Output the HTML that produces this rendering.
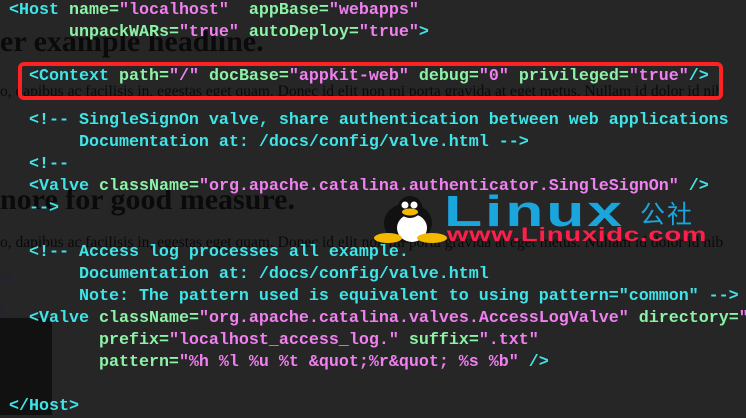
<!DOCTYPE html>
<html><head><style>
body{margin:0;width:746px;height:415px;background:#262626;overflow:hidden;position:relative}
.g{position:absolute;font-family:"Liberation Serif",serif;color:#0a0a0a;white-space:nowrap}
.h{font-size:30px;font-weight:bold}
.p{font-size:15.5px}
.l{position:absolute;left:9px;font-family:"Liberation Mono",monospace;font-size:16.67px;font-weight:bold;white-space:pre;line-height:22px}
.t{color:#3fe4e8}.a{color:#8cf2a6}.v{color:#f080f0}.c{color:#3fe4e8}
</style></head><body>
<div style="position:absolute;left:0;top:318px;width:52px;height:97px;background:#111"></div>
<div class="g h" style="left:0;top:25px">er example headline.</div>
<div class="g p" style="left:0;top:83px">o, dapibus ac facilisis in, egestas eget quam. Donec id elit non mi porta gravida at eget metus. Nullam id dolor id nib</div>
<div class="g h" style="left:0;top:183px">nore for good measure.</div>
<div class="g p" style="left:0;top:234px">o, dapibus ac facilisis in, egestas eget quam. Donec id elit non mi porta gravida at eget metus. Nullam id dolor id nib</div>
<div class="g p" style="left:0;top:268px;color:#223;text-decoration:underline">ry</div>
<div class="g p" style="left:0;top:298px;color:#223;text-decoration:underline">t</div>
<div style="position:absolute;left:18px;top:62px;width:697px;height:30px;border:4px solid #ff2222;border-radius:6px"></div>

<div class="l" style="top:0"><span class="t">&lt;Host</span> <span class="a">name=</span><span class="v">"localhost"</span>  <span class="a">appBase=</span><span class="v">"webapps"</span></div>
<div class="l" style="top:22px">      <span class="a">unpackWARs=</span><span class="v">"true"</span> <span class="a">autoDeploy=</span><span class="v">"true"</span><span class="t">&gt;</span></div>
<div class="l" style="top:66px">  <span class="t">&lt;Context</span> <span class="a">path=</span><span class="v">"/"</span> <span class="a">docBase=</span><span class="v">"appkit-web"</span> <span class="a">debug=</span><span class="v">"0"</span> <span class="a">privileged=</span><span class="v">"true"</span><span class="t">/&gt;</span></div>
<div class="l c" style="top:110px">  &lt;!-- SingleSignOn valve, share authentication between web applications</div>
<div class="l c" style="top:132px">       Documentation at: /docs/config/valve.html --&gt;</div>
<div class="l c" style="top:154px">  &lt;!--</div>
<div class="l" style="top:176px">  <span class="t">&lt;Valve</span> <span class="a">className=</span><span class="v">"org.apache.catalina.authenticator.SingleSignOn"</span> <span class="t">/&gt;</span></div>
<div class="l c" style="top:198px">  --&gt;</div>
<div class="l c" style="top:242px">  &lt;!-- Access log processes all example.</div>
<div class="l c" style="top:264px">       Documentation at: /docs/config/valve.html</div>
<div class="l c" style="top:286px">       Note: The pattern used is equivalent to using pattern="common" --&gt;</div>
<div class="l" style="top:308px">  <span class="t">&lt;Valve</span> <span class="a">className=</span><span class="v">"org.apache.catalina.valves.AccessLogValve"</span> <span class="a">directory=</span><span class="v">"</span></div>
<div class="l" style="top:330px">         <span class="a">prefix=</span><span class="v">"localhost_access_log."</span> <span class="a">suffix=</span><span class="v">".txt"</span></div>
<div class="l" style="top:352px">         <span class="a">pattern=</span><span class="v">"%h %l %u %t &amp;quot;%r&amp;quot; %s %b"</span> <span class="t">/&gt;</span></div>
<div class="l t" style="top:396px">&lt;/Host&gt;</div>

<svg style="position:absolute;left:372px;top:195px" width="80" height="50">
<ellipse cx="36" cy="28" rx="24" ry="20" fill="#111"/>
<ellipse cx="40" cy="33" rx="15" ry="14" fill="#fff"/>
<ellipse cx="38" cy="12" rx="12" ry="11" fill="#111"/>
<circle cx="33" cy="10" r="3.5" fill="#fff"/><circle cx="42" cy="10" r="3.5" fill="#fff"/>
<ellipse cx="38" cy="17" rx="8" ry="3.5" fill="#f5b800"/>
<ellipse cx="16" cy="43" rx="14" ry="5" fill="#f5b800"/>
<ellipse cx="60" cy="43" rx="15" ry="5" fill="#f5b800"/>
</svg>
<div style="position:absolute;left:444px;top:190px;font-family:'Liberation Sans',sans-serif;font-weight:bold;font-size:44px;line-height:44px;color:#1aa6dc;letter-spacing:2px;transform:scaleX(1.42);transform-origin:left">Linux</div>
<div style="position:absolute;left:640px;top:203px;font-family:'Liberation Sans','Noto Sans CJK SC',sans-serif;font-size:25px;line-height:25px;color:#1aa6dc;letter-spacing:2px">公社</div>
<div style="position:absolute;left:447px;top:226px;font-family:'Liberation Sans',sans-serif;font-weight:bold;font-size:19px;line-height:19px;color:#ff1f4a;transform:scaleX(1.45);transform-origin:left;letter-spacing:0.5px">www.Linuxidc.com</div>
</body></html>
